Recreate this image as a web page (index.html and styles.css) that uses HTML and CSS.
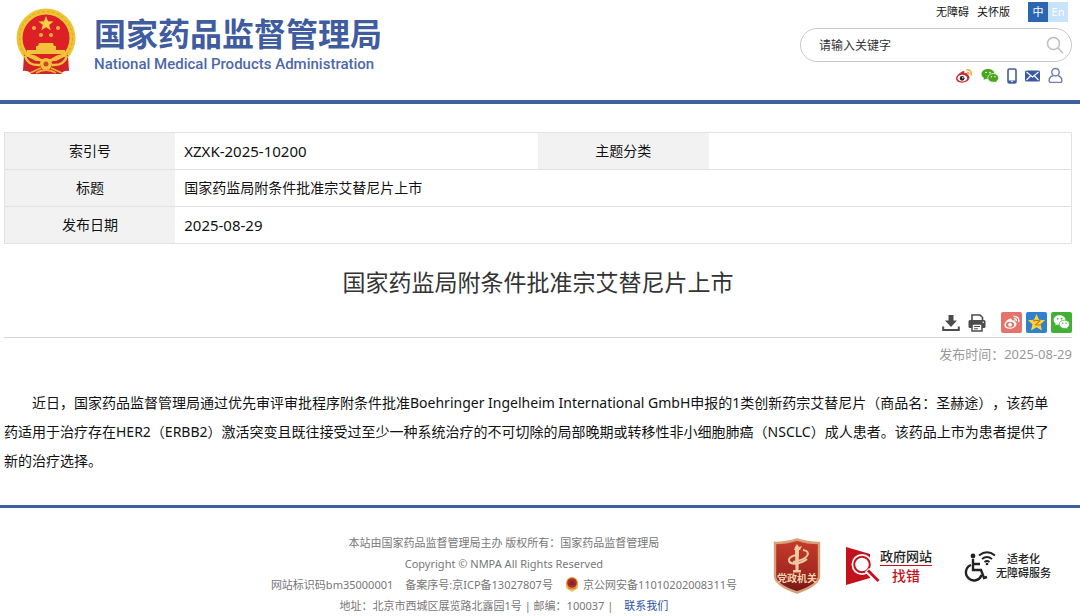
FILE: index.html
```html
<!DOCTYPE html>
<html lang="zh-CN">
<head>
<meta charset="utf-8">
<meta name="viewport" content="width=device-width, initial-scale=1">
<title>国家药监局附条件批准宗艾替尼片上市</title>
<link rel="stylesheet" href="styles.css">
</head>
<body>
<header class="site-header">
  <a class="brand" href="#">
    <svg class="emblem" viewBox="0 0 60 67" aria-hidden="true">
      <circle cx="30" cy="30" r="29.500" fill="#eec436"/>
      <circle cx="30" cy="30" r="26.500" fill="none" stroke="#dba524" stroke-width="1" stroke-dasharray="3 2"/>
      <circle cx="30" cy="30" r="23.500" fill="#dd1f26"/>
      <path d="M8 47 L20 53 H40 L52 47 L53 63 Q48 62 45 66 H15 Q12 62 7 63Z" fill="#cf2229"/>
      <path d="M30 8 L32 13.200 L37.500 13.500 L33.200 17 L34.700 22.300 L30 19.300 L25.300 22.300 L26.800 17 L22.500 13.500 L28 13.200Z" fill="#f8cf45"/>
      <g fill="#f3b13c"><circle cx="18" cy="20" r="2"/><circle cx="42" cy="20" r="2"/><circle cx="25" cy="27" r="2"/><circle cx="35" cy="27" r="2"/></g>
      <path d="M23 35 H37 L38 38 H22Z M20 38 H40 V42 H49 V46 H11 V42 H20Z" fill="#f3c23b"/>
      <path d="M10 47 Q19 48 24 52 L30 54 L36 52 Q41 48 50 47" fill="none" stroke="#f3c23b" stroke-width="3"/>
      <path d="M9 48 Q12 58 24 57 M51 48 Q48 58 36 57" fill="none" stroke="#f3c23b" stroke-width="2.500"/>
      <circle cx="30" cy="56" r="6" fill="#f3c23b"/><circle cx="30" cy="56" r="2.500" fill="#d8442a"/>
      <path d="M14 65 L25 60 M46 65 L35 60 M20 65 Q30 59 40 65" fill="none" stroke="#f0ad35" stroke-width="1.800"/>
    </svg>
    <span class="brand-text">
      <span class="brand-cn">国家药品监督管理局</span>
      <span class="brand-en">National Medical Products Administration</span>
    </span>
  </a>
  <div class="tools">
    <nav class="top-links">
      <a href="#">无障碍</a>
      <a href="#">关怀版</a>
      <span class="lang"><a class="lang-cn" href="#">中</a><a class="lang-en" href="#">En</a></span>
    </nav>
    <form class="search">
      <input class="search-input" type="text" placeholder="请输入关键字" aria-label="请输入关键字">
      <button class="icon-button" type="button" aria-label="搜索">
        <svg width="18" height="18" viewBox="0 0 18 18" fill="none" stroke="#bdbdbd" stroke-width="1.500"><circle cx="7.500" cy="7.500" r="6"/><path d="M12 12 L17 17"/></svg>
      </button>
    </form>
    <nav class="social">
      <a href="#" aria-label="微博">
        <svg width="18" height="16" viewBox="0 0 19 16"><path d="M8 3 Q10.500 2 10 5 Q14 4 13.500 7 Q16 8 15 11 Q13 15 7.500 15 Q1 15 1 10.500 Q1.500 6.500 8 3Z" fill="#cf2830"/><ellipse cx="7.700" cy="10.300" rx="5" ry="3.600" fill="#fff"/><circle cx="7.500" cy="10.500" r="2.500" fill="#222"/><circle cx="8.200" cy="9.800" r=".8" fill="#fff"/><path d="M12 1.500 Q18 1 17 7.500 M12.500 4 Q15 4 14.700 6.500" fill="none" stroke="#edaa4c" stroke-width="1.600"/></svg>
      </a>
      <a href="#" aria-label="微信">
        <svg width="18" height="16" viewBox="0 0 18 16"><path d="M7 1 C3 1 .5 3.300 .5 6 C.5 7.700 1.500 9 3 10 L2.500 12 L5 10.800 Q6 11 7 11 C11 11 13.500 8.700 13.500 6 S11 1 7 1Z" fill="#49a51c"/><path d="M12.200 5.500 C9 5.500 6.800 7.400 6.800 9.900 S9 14.200 12.200 14.200 L13.700 14 L16 15 L15.500 13.200 C17 12.300 17.600 11 17.600 9.900 C17.600 7.400 15.400 5.500 12.200 5.500Z" fill="#49a51c" stroke="#fff" stroke-width=".7"/><g fill="#fff"><circle cx="5" cy="4.500" r=".8"/><circle cx="9" cy="4.500" r=".8"/><circle cx="10.500" cy="8.700" r=".7"/><circle cx="14" cy="8.700" r=".7"/></g></svg>
      </a>
      <a href="#" aria-label="手机版">
        <svg width="10" height="16" viewBox="0 0 10 16"><rect x="1" y="1" width="8" height="14" rx="1.500" fill="#fff" stroke="#3f5e9f" stroke-width="1.600"/><path d="M1 12.500 H9 V15 H1Z" fill="#3f5e9f"/><circle cx="5" cy="13.500" r=".8" fill="#fff"/></svg>
      </a>
      <a href="#" aria-label="邮箱">
        <svg width="15" height="12" viewBox="0 0 15 12"><rect width="15" height="11" y=".5" rx="1.500" fill="#3a599e"/><path d="M1.500 2 L7.500 7 L13.500 2 M1.500 10 L5.500 6 M13.500 10 L9.500 6" fill="none" stroke="#fff" stroke-width="1.100"/></svg>
      </a>
      <a href="#" aria-label="个人中心">
        <svg width="15" height="17" viewBox="0 0 16 17" fill="none" stroke="#6f7fb0" stroke-width="1.500"><circle cx="8" cy="5" r="4"/><path d="M5.500 8.500 C2.500 9.500 1.200 11.500 1.200 13.800 Q1.200 15.800 3.200 15.800 H12.800 Q14.800 15.800 14.800 13.800 C14.800 11.500 13.500 9.500 10.500 8.500"/></svg>
      </a>
    </nav>
  </div>
</header>

<main class="content">
  <table class="meta">
    <colgroup><col class="col-label"><col class="col-value"><col class="col-label"><col class="col-value"></colgroup>
    <tr><th scope="row">索引号</th><td class="code">XZXK-2025-10200</td><th scope="row">主题分类</th><td></td></tr>
    <tr><th scope="row">标题</th><td colspan="3">国家药监局附条件批准宗艾替尼片上市</td></tr>
    <tr><th scope="row">发布日期</th><td class="code" colspan="3">2025-08-29</td></tr>
  </table>

  <article>
    <h1 class="title">国家药监局附条件批准宗艾替尼片上市</h1>
    <div class="actions">
      <button class="icon-button" type="button" aria-label="下载">
        <svg width="18" height="18" viewBox="0 0 18 18" fill="#4c4c4c"><path d="M6.500 1 H11.500 V6.500 H15 L9 13 L3 6.500 H6.500Z"/><path d="M1.200 12.500 V16 H16.800 V12.500" fill="none" stroke="#4c4c4c" stroke-width="2"/></svg>
      </button>
      <button class="icon-button" type="button" aria-label="打印">
        <svg width="18" height="18" viewBox="0 0 18 18"><path d="M4 6 V1 H12 L14.500 3.500 V6" fill="#fff" stroke="#4c4c4c" stroke-width="1.600"/><rect x="0.500" y="6" width="17" height="8" rx="1.500" fill="#4c4c4c"/><rect x="4" y="10" width="10" height="7" fill="#fff" stroke="#4c4c4c" stroke-width="1.500"/><path d="M6 12.500 H12 M6 14.800 H10" stroke="#4c4c4c"/><circle cx="15.200" cy="8.300" r=".8" fill="#fff"/></svg>
      </button>
      <span class="share">
        <a href="#" aria-label="分享到微博">
          <svg width="21" height="21" viewBox="0 0 22 22"><rect width="22" height="22" rx="2" fill="#e5736c"/><path d="M9 7 Q11.500 6 11.500 9 Q15.500 8 15 10.500 Q17 11.500 16 14 Q14 17.500 9.500 17.500 Q3.500 17.500 3.500 13.500 Q4 9.500 9 7Z" fill="#fff"/><ellipse cx="9.500" cy="13.300" rx="4.300" ry="3" fill="#e5736c"/><circle cx="9.500" cy="13.300" r="2" fill="#fff"/><path d="M13 4.500 Q19.500 4.500 18.500 10.500 M13.500 7 Q16.500 7 16 9.500" fill="none" stroke="#fff" stroke-width="1.400"/></svg>
        </a>
        <a href="#" aria-label="分享到QQ空间">
          <svg width="21" height="21" viewBox="0 0 22 22"><rect width="22" height="22" rx="2" fill="#2f80cd"/><path d="M11 2 L13.600 8 L20 8.600 L15.200 12.900 L16.700 19.500 L11 16 L5.300 19.500 L6.800 12.900 L2 8.600 L8.400 8Z" fill="#ffd43b"/><path d="M7.500 9.300 Q11 8.200 14.500 9.300 L10 13.300 Q12.500 14 15.500 13.300" fill="none" stroke="#c77a15" stroke-width="1.200"/></svg>
        </a>
        <a href="#" aria-label="分享到微信">
          <svg width="21" height="21" viewBox="0 0 22 22"><rect width="22" height="22" rx="2" fill="#42b035"/><path d="M9 3.500 C5.300 3.500 2.800 5.700 2.800 8.500 C2.800 10.100 3.700 11.500 5 12.300 L4.500 14.200 L6.800 13 Q8 13.400 9 13.400 C12.700 13.400 15.200 11.200 15.200 8.500 S12.700 3.500 9 3.500Z" fill="#fff"/><path d="M14 8.500 C10.800 8.500 8.700 10.400 8.700 12.900 S10.800 17.200 14 17.200 L15.500 17 L17.700 18.200 L17.300 16.300 C18.700 15.400 19.400 14.200 19.400 12.900 C19.400 10.400 17.200 8.500 14 8.500Z" fill="#fff" stroke="#42b035" stroke-width=".8"/><g fill="#42b035"><circle cx="7" cy="7" r=".9"/><circle cx="11" cy="7" r=".9"/><circle cx="12.300" cy="11.700" r=".8"/><circle cx="15.800" cy="11.700" r=".8"/></g></svg>
        </a>
      </span>
    </div>
    <p class="published">发布时间：2025-08-29</p>
    <p class="body-text">近日，国家药品监督管理局通过优先审评审批程序附条件批准Boehringer Ingelheim International GmbH申报的1类创新药宗艾替尼片（商品名：圣赫途），该药单药适用于治疗存在HER2（ERBB2）激活突变且既往接受过至少一种系统治疗的不可切除的局部晚期或转移性非小细胞肺癌（NSCLC）成人患者。该药品上市为患者提供了新的治疗选择。</p>
  </article>
</main>

<footer class="site-footer">
  <div class="footer-text">
    <p>本站由国家药品监督管理局主办 版权所有：国家药品监督管理局</p>
    <p>Copyright © NMPA All Rights Reserved</p>
    <p class="records">
      <span>网站标识码bm35000001</span>
      <span>备案序号:京ICP备13027807号</span>
      <span class="police"><svg width="14" height="15" viewBox="0 0 14 15" aria-hidden="true"><path d="M1 7 Q0 12 4 13 L7 15 L10 13 Q14 12 13 7Z" fill="#ecc15b"/><circle cx="7" cy="6" r="6" fill="#d9a441"/><circle cx="7" cy="6" r="4.800" fill="#b5282b"/><path d="M4 7 H10 M5 5 H9" stroke="#5a2324"/><path d="M3 11 Q7 13 11 11" stroke="#c98a2b" fill="none"/></svg>京公网安备11010202008311号</span>
    </p>
    <p>地址：北京市西城区展览路北露园1号 | 邮编：100037 |　<a href="#">联系我们</a></p>
  </div>
  <div class="badges">
    <a class="shield" href="#" aria-label="党政机关">
      <svg width="48" height="56" viewBox="0 0 48 56">
        <defs><linearGradient id="shield" x1="0" y1="0" x2="0" y2="1"><stop offset="0" stop-color="#c63b2b"/><stop offset=".6" stop-color="#a52a22"/><stop offset="1" stop-color="#6f1714"/></linearGradient></defs>
        <path d="M24 1.500 Q34 5 46 5 V38 Q46 47 24 54.500 Q2 47 2 38 V5 Q14 5 24 1.500Z" fill="url(#shield)" stroke="#d8a078" stroke-width="2.400"/>
        <path d="M22 9 L24 6 L26 9 L29 8 L27 12 H21Z M22 12 H26 L25.500 32 H28 V34.500 H20 V32 H22.500Z" fill="#efc9a0"/>
        <path d="M30 12 Q37 13 34 18 Q31 22 20 24 M23 17 Q15 19 16 23 Q18 27 26 25 Q32 23 34 21" fill="none" stroke="#efc9a0" stroke-width="2"/>
        <text class="shield-text" x="24" y="44" text-anchor="middle">党政机关</text>
      </svg>
    </a>
    <a class="report" href="#">
      <svg width="35" height="40" viewBox="0 0 35 40" aria-hidden="true"><path d="M1 1 L25 8 V32 L1 39Z" fill="#c4121d"/><circle cx="17" cy="18.500" r="10.500" fill="#fff"/><circle cx="17" cy="18.500" r="7.800" fill="#fff" stroke="#c4121d" stroke-width="2"/><path d="M22 24 L32 34" stroke="#fff" stroke-width="6"/><path d="M23 24.500 L33.500 35" stroke="#c4121d" stroke-width="2.800"/></svg>
      <span class="report-text"><span class="report-top">政府网站</span><span class="report-bottom">找错</span></span>
    </a>
    <a class="access" href="#">
      <svg width="32" height="32" viewBox="0 0 32 32" fill="none" stroke="#222" stroke-width="2.400"><circle cx="9" cy="6" r="2.400" fill="#222" stroke="none"/><path d="M9 9 V20 H17 L20 28 L23 27 M9 14 H16"/><path d="M7 15 A8 8 0 1 0 17.500 25"/><path d="M15 5.500 Q23 -1 31 5.500 M18 9 Q23 5 28 9 M20.500 12 Q23 10 25.500 12" stroke-width="1.900"/><circle cx="23" cy="14" r="1.300" fill="#222" stroke="none"/></svg>
      <span class="access-text"><span>适老化</span><span>无障碍服务</span></span>
    </a>
  </div>
</footer>
</body>
</html>
```

FILE: styles.css
```css
* { box-sizing: border-box; }

body {
  margin: 0;
  background: #fff;
  color: #111;
  font: 14px/28px "Noto Sans", "Noto Sans CJK SC", sans-serif;
  text-spacing-trim: space-all;
}

a { color: inherit; text-decoration: none; }
p { margin: 0; }
svg { display: block; flex: none; }

.icon-button {
  padding: 0;
  border: 0;
  background: none;
  cursor: pointer;
}

/* Header */
.site-header {
  display: flex;
  justify-content: space-between;
  min-height: 104px;
  padding: 2px 8px 0 16px;
  border-bottom: 4px solid #3f5f9f;
}

.brand {
  display: flex;
  align-items: flex-start;
  gap: 18px;
  padding-top: 6px;
  color: #3f5c9f;
}

.emblem { width: 60px; height: 67px; }

.brand-text { display: flex; flex-direction: column; padding-top: 8px; }
.brand-cn { font-size: 32px; line-height: 36px; font-weight: 700; }
.brand-en { font: 500 15px/24px Roboto, sans-serif; color: #4d68a8; }

.tools {
  display: flex;
  flex-direction: column;
  align-items: flex-end;
  width: 272px;
}

.top-links {
  display: flex;
  align-items: center;
  gap: 8px;
  padding-right: 4px;
  font-size: 11px;
  line-height: 20px;
}

.lang { display: flex; padding-left: 10px; text-align: center; }
.lang a { width: 20px; }
.lang-cn { background: #2b67b0; color: #fff; }
.lang-en { background: #c9e3fa; color: #fff; }

.search {
  display: flex;
  align-items: center;
  width: 100%;
  height: 34px;
  margin: 6px 0 5px;
  padding: 0 7px 0 18px;
  border: 1px solid #c9c9c9;
  border-radius: 17px;
}

.search-input {
  flex: 1;
  min-width: 0;
  padding: 2px 0 0;
  border: 0;
  outline: 0;
  background: none;
  color: #333;
  font: inherit;
  font-size: 12px;
}
.search-input::placeholder { color: #333; opacity: 1; }

.social { display: flex; align-items: center; gap: 8px; padding-right: 9px; }

/* Article */
.content { padding: 28px 8px 30px 4px; }

.meta { width: 100%; table-layout: fixed; border-collapse: collapse; line-height: 20px; }
.col-label { width: 16%; }
.col-value { width: 34%; }
.meta tr { height: 37px; border: 1px solid #e2e2e2; }
.meta th { padding: 0; background: #f2f2f2; font-weight: 400; text-align: center; }
.meta td { padding: 0 9px; }
.meta .code { font-size: 15px; }

.title {
  margin: 20px 0 12px;
  color: #333;
  font-size: 23px;
  line-height: 36px;
  font-weight: 400;
  text-align: center;
}

.actions {
  display: flex;
  justify-content: flex-end;
  align-items: center;
  gap: 8px;
  padding-bottom: 4px;
  border-bottom: 1px solid #d5d5d5;
}
.share { display: flex; gap: 4px; padding-left: 7px; }

.published {
  color: #999;
  font-size: 13px;
  line-height: 32px;
  text-align: right;
}

.body-text { margin-top: 18px; padding-right: 16px; line-height: 29px; text-indent: 2em; }

/* Footer */
.site-footer {
  display: flex;
  justify-content: flex-end;
  align-items: flex-start;
  gap: 36px;
  padding: 24px 29px 0;
  border-top: 3px solid #3f5f9f;
}

.footer-text {
  color: #777;
  font-size: 11px;
  line-height: 21px;
  text-align: center;
}
.footer-text a { color: #2d529c; }
.records { display: flex; justify-content: center; gap: 12px; }
.police { display: flex; align-items: center; gap: 4px; }

.badges { display: flex; align-items: center; gap: 32px; padding-top: 6px; }
.shield { margin-right: -8px; }
.shield-text { fill: #f3d3ae; font-size: 10px; font-weight: 700; }

.report, .access { display: flex; align-items: center; }
.report-text { display: flex; flex-direction: column; text-align: center; color: #222; font-weight: 500; }
.report-top { border-bottom: 1px solid #c4121d; font-size: 13px; line-height: 18px; }
.report-bottom { color: #c4121d; font-size: 14px; line-height: 20px; }

.access-text { display: flex; flex-direction: column; color: #222; font-size: 11px; line-height: 14px; font-weight: 500; text-align: center; }
```
